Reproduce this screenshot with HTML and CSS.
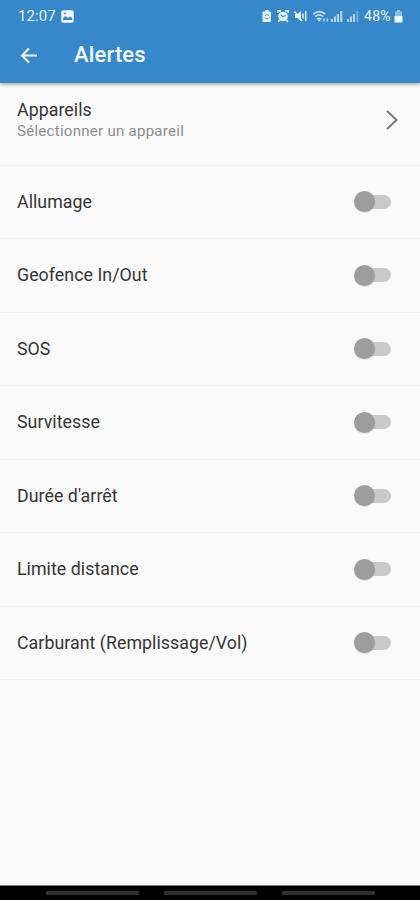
FILE: index.html
```html
<!DOCTYPE html>
<html lang="fr">
<head>
<meta charset="utf-8">
<title>Alertes</title>
<link rel="stylesheet" href="styles.css">
</head>
<body>
<div class="screen">
  <header class="header">
    <div class="status">
      <span class="clock">12:07</span>
      <svg class="photo" width="13" height="13" viewBox="0 0 13 13"><rect x=".3" y=".3" width="12.4" height="12.4" rx="2" fill="#f1faff"/><path d="M2 10V8l2.500-2L7 8l2-1.500L11.200 8v2z" fill="#3787cb"/><circle cx="4" cy="3.500" r="1" fill="#3787cb"/></svg>
      <svg class="icons" width="98" height="16" viewBox="0 0 98 16" fill="none" stroke="#e7f5fc">
        <path d="M3.500 2h3v1.500H8q1 0 1 1V13q0 1-1 1H1.500q-1 0-1-1V4.500q0-1 1-1h2z" fill="#e7f5fc" stroke="none"/>
        <path d="M3 8a2 2 0 0 1 3.800 0M6.800 9.500A2 2 0 0 1 3 9.500" stroke="#3787cb" stroke-width=".9"/>
        <circle cx="21" cy="8.500" r="4.800" fill="#e7f5fc" stroke="none"/>
        <path d="M15.900 5V2.900H19M23 2.900h3.200V5M17.500 12l-1.300 2M24.500 12l1.300 2" stroke-width="1.600"/>
        <path d="M18.800 6.800l2.200 2 2.600-1.500" stroke="#3787cb" stroke-width="1.200"/>
        <path d="M33 6h2.500L39 3v10l-3.500-3H33z" fill="#e7f5fc" stroke="none"/>
        <path d="M32.500 3.500l7.500 9.500M41 5.500v5M43.700 3v10" stroke-width="1.400"/>
        <path d="M51.200 6.200q6-5 12 0M53.200 8.600q4-3.300 8 0M55.200 11q2-1.500 4 0" stroke-width="1.700" opacity=".8"/>
        <path d="M57.200 13.500l-2-2h4z" fill="#e7f5fc" stroke="none"/><path d="M62 10.500v3M65.500 10.500v3" stroke-width="1.500" opacity=".8"/>
        <path d="M70 11v3M73 8.500V14M76 6v8M79.300 3v11" stroke-width="2.100" opacity=".72"/>
        <path d="M86 11v3M89 8.500V14M92 6v8" stroke-width="2.100" opacity=".72"/><path d="M95.500 3v11" stroke-width="1.800" opacity=".35"/>
      </svg>
      <span class="percent">48%</span>
      <svg class="battery" width="9" height="13" viewBox="0 0 9 13"><path d="M3 0h3v1.500h2V6H1V1.500h2z" fill="#8fc0e6"/><path d="M.5 6h8v6.500h-8z" fill="#f1faff"/></svg>
    </div>
    <div class="toolbar">
      <svg class="back" width="18" height="18" viewBox="0 0 18 18" fill="none" stroke="#f1faff" stroke-width="2"><path d="M17 9.500H2.500M9 2.500l-7 7 7 7"/></svg>
      <h1>Alertes</h1>
    </div>
  </header>
  <main class="list">
    <div class="row device">
      <div><div class="label">Appareils</div><div class="hint">Sélectionner un appareil</div></div>
      <svg class="chevron" width="12" height="20" viewBox="0 0 12 20" fill="none" stroke="#777" stroke-width="2"><path d="M1 1l9.500 9L1 19"/></svg>
    </div>
    <div class="row"><span class="label">Allumage</span><span class="switch"></span></div>
    <div class="row"><span class="label">Geofence In/Out</span><span class="switch"></span></div>
    <div class="row"><span class="label">SOS</span><span class="switch"></span></div>
    <div class="row"><span class="label">Survitesse</span><span class="switch"></span></div>
    <div class="row"><span class="label">Durée d'arrêt</span><span class="switch"></span></div>
    <div class="row"><span class="label">Limite distance</span><span class="switch"></span></div>
    <div class="row"><span class="label">Carburant (Remplissage/Vol)</span><span class="switch"></span></div>
  </main>
  <footer class="nav"><i></i><i></i><i></i></footer>
</div>
</body>
</html>
```
FILE: styles.css
```css
* { box-sizing: border-box; }
body { margin: 0; font-family: Roboto, sans-serif; background: #fafafa; }
.screen { width: 420px; height: 900px; display: flex; flex-direction: column; overflow: hidden; }
.header { height: 83px; flex: none; background: #3787cb; color: #f1faff; box-shadow: 0 1px 4px rgba(0,0,0,.4); }
.status { height: 32px; display: flex; align-items: center; padding: 0 17px 0 18px; }
.clock { font-size: 15px; letter-spacing: .1px; width: 43px; color: #e0f1fb; }
.icons { margin-left: auto; }
.percent { font-size: 14px; letter-spacing: .3px; width: 29px; margin-left: 4px; margin-right: 1px; color: #e7f5fc; white-space: nowrap; }
.toolbar { height: 46px; display: flex; align-items: center; padding-left: 20px; }
h1 { margin: 0 0 0 36px; font-size: 22px; line-height: 26px; font-weight: 500; letter-spacing: .15px; }
.list { flex: 1; }
.row { height: 73.5px; display: flex; align-items: center; justify-content: space-between; padding: 0 29px 0 17px; border-bottom: 1px solid #f2f2f2; }
.device { height: 82.5px; padding: 0 22px 7px 17px; }
.label { font-size: 17.8px; line-height: 22px; letter-spacing: .04px; color: #353535; }
.hint { font-size: 15px; line-height: 21px; letter-spacing: .28px; color: #8d8d8d; }
.switch { width: 37px; height: 22px; display: grid; align-items: center; }
.switch::before, .switch::after { content: ""; grid-area: 1 / 1; }
.switch::before { justify-self: end; width: 27px; height: 14px; border-radius: 7px; background: #c9c9c9; }
.switch::after { width: 21px; height: 21px; border-radius: 50%; background: #9d9d9d; box-shadow: 0 1px 1px rgba(0,0,0,.12); }
.nav { height: 15px; flex: none; background: #000; border-top: 1px solid #777; display: flex; justify-content: center; gap: 25px; padding-top: 5px; }
.nav i { width: 93px; height: 4px; border-radius: 1px; background: #303030; }
```
